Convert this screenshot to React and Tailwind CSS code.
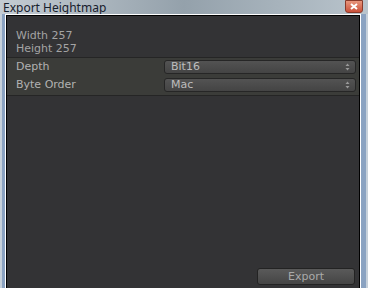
import React from 'react';

function Arrows() {
  return (
    <svg width="5" height="8" viewBox="0 0 5 8" className="shrink-0">
      <path d="M2.5 0.5 L4.5 3 L0.5 3 Z" fill="#9a9a9a" />
      <path d="M0.5 5 L4.5 5 L2.5 7.5 Z" fill="#9a9a9a" />
    </svg>
  );
}

function Dropdown({ value }) {
  return (
    <div className="w-[192px] h-[14px] flex items-center justify-between pl-[6px] pr-[5px] rounded-[3px] border border-[#262626] bg-gradient-to-b from-[#535353] to-[#444444] text-[#bdbdbd]">
      <span className="leading-[12px]">{value}</span>
      <Arrows />
    </div>
  );
}

function Row({ label, value }) {
  return (
    <div className="flex items-center justify-between h-[14px] pl-[9px] pr-[3px]">
      <span className="leading-[14px] text-[#b2b2b2]">{label}</span>
      <Dropdown value={value} />
    </div>
  );
}

function TitleBar() {
  return (
    <div className="h-[14px] flex items-start justify-between bg-gradient-to-r from-[#c4ccd3] via-[#94a1ab] to-[#b9c4cc]">
      <span className="pl-[3px] pt-[1px] text-[12px] leading-[13px] text-[#17202c] font-['Noto_Sans',sans-serif]">
        Export Heightmap
      </span>
      <div className="mr-[5px] w-[18px] h-[13px] flex items-center justify-center rounded-b-[3px] border border-[#8a3a2a] bg-gradient-to-b from-[#e8957c] to-[#c9503a]">
        <svg width="8" height="7" viewBox="0 0 8 7">
          <path d="M1 1 L7 6 M7 1 L1 6" stroke="#ffffff" strokeWidth="2" />
        </svg>
      </div>
    </div>
  );
}

function App() {
  return (
    <div className="w-[368px] h-[288px] flex flex-col overflow-hidden bg-[#8ea5c2] font-['DejaVu_Sans',sans-serif] text-[11px]">
      <TitleBar />
      <div className="flex-1 flex min-h-0">
        <div className="w-[2px] bg-[#c6d0da]" />
        <div className="w-[3px] bg-[#8aa2c1]" />
        <div className="flex-1 flex flex-col border-t border-l border-r border-white">
          <div className="flex-1 flex flex-col border-t border-l border-r border-black bg-[#333335]">
            <div className="pt-[13px] pl-[9px] text-[#a4a4a4] leading-[13px]">
              <div>Width 257</div>
              <div>Height 257</div>
            </div>
            <div className="mt-[2px] pt-[2px] pb-[3px] flex flex-col gap-[4px] border-t border-b border-[#252525] bg-[#3b3c39]">
              <Row label="Depth" value="Bit16" />
              <Row label="Byte Order" value="Mac" />
            </div>
            <div className="mt-auto flex justify-end pr-[4px] pb-[3px]">
              <button className="w-[98px] h-[17px] rounded-[3px] border border-[#232323] bg-gradient-to-b from-[#5a5a5a] to-[#454545] text-[#aaaaaa] leading-[15px]">
                Export
              </button>
            </div>
          </div>
        </div>
        <div className="w-[5px] bg-[#8aa2c1]" />
        <div className="w-[2px] bg-[#c6d0da]" />
      </div>
    </div>
  );
}

export default App;
